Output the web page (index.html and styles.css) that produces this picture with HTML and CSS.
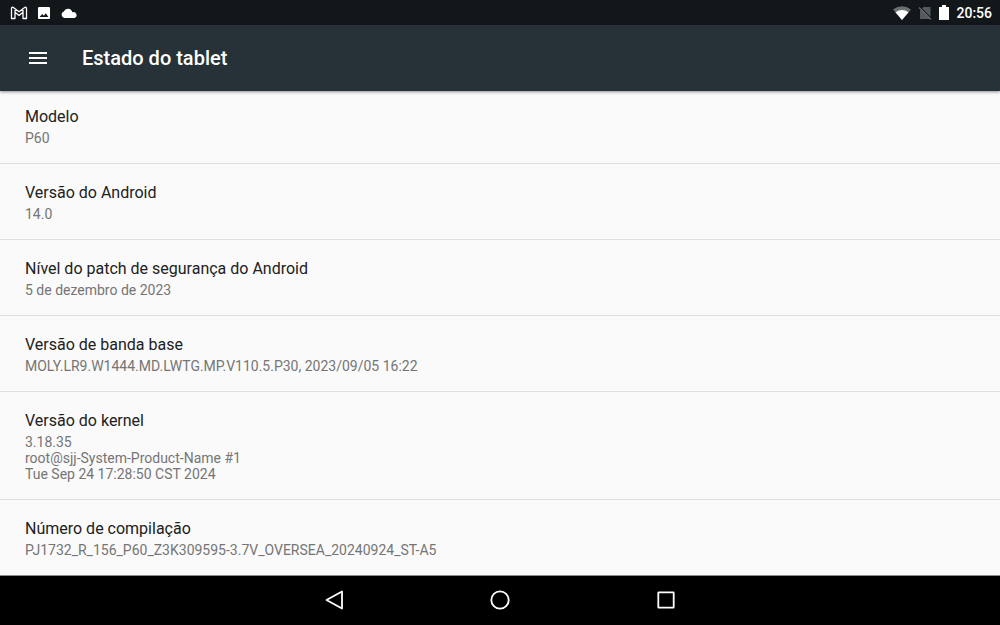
FILE: index.html
```html
<!DOCTYPE html>
<html lang="pt">
<head>
	<meta charset="utf-8">
	<meta name="viewport" content="width=device-width, initial-scale=1">
	<title>Estado do tablet</title>
	<link rel="stylesheet" href="styles.css">
</head>
<body>
	<div class="status">
		<div class="notifications">
			<svg width="18" height="14" viewBox="0 0 18 14"><path d="M1.500 12.500V2.600Q1.500 1 3 1.300L9 5.800 15 1.300Q16.500 1 16.500 2.600V12.500H13V6.300L9 9.500 5 6.300V12.500ZM5 2.800V6.300M13 2.800V6.300" fill="none" stroke="#fff" stroke-width="1.300" stroke-linejoin="round"/></svg>
			<svg width="14" height="14" viewBox="0 0 14 14"><path fill="#fff" fill-rule="evenodd" d="M2 1H12Q13 1 13 2V12Q13 13 12 13H2Q1 13 1 12V2Q1 1 2 1ZM2.600 11H11.400L8.800 7.200 6.800 9.700 5.200 8Z"/></svg>
			<svg width="18" height="14" viewBox="0 0 18 14"><path fill="#fff" d="M4.500 12A3.300 3.300 0 0 1 3.800 5.600A4.500 4.500 0 0 1 12.300 6.200A3 3 0 0 1 14.500 12Z"/></svg>
		</div>
		<div class="system">
			<svg width="18" height="14" viewBox="0 0 18 14"><path fill="#69706f" d="M0 3.500Q9-3 18 3.500L9 14Z"/><path fill="#fff" d="M2.500 6.200Q9 1.800 15.500 6.200L9 14Z"/></svg>
			<svg width="14" height="14" viewBox="0 0 14 14"><path fill="#555b5d" d="M5.500 1H12.500V13H2V4.500Z"/><path d="M1.700 .8L13.700 12.800" stroke="#12171a" stroke-width="1.200"/><path d="M1 1.500L13 13.500" stroke="#666c6e" stroke-width="1.200"/></svg>
			<svg width="10" height="16" viewBox="0 0 10 16"><path fill="#fff" d="M3 0H7V2H10V15H0V2H3Z"/></svg>
			<span class="clock">20:56</span>
		</div>
	</div>
	<header class="toolbar">
		<button class="menu" type="button" aria-label="Menu">
			<svg width="18" height="14" viewBox="0 0 18 14"><path fill="#fff" d="M0 1H18V3H0ZM0 6H18V8H0ZM0 11H18V13H0Z"/></svg>
		</button>
		<h1 class="title">Estado do tablet</h1>
	</header>
	<main class="content">
		<dl class="list">
			<div class="item">
				<dt>Modelo</dt>
				<dd>P60</dd>
			</div>
			<div class="item">
				<dt>Versão do Android</dt>
				<dd>14.0</dd>
			</div>
			<div class="item">
				<dt>Nível do patch de segurança do Android</dt>
				<dd>5 de dezembro de 2023</dd>
			</div>
			<div class="item">
				<dt>Versão de banda base</dt>
				<dd>MOLY.LR9.W1444.MD.LWTG.MP.V110.5.P30, 2023/09/05 16:22</dd>
			</div>
			<div class="item">
				<dt>Versão do kernel</dt>
				<dd>3.18.35<br>root@sjj-System-Product-Name #1<br>Tue Sep 24 17:28:50 CST 2024</dd>
			</div>
			<div class="item">
				<dt>Número de compilação</dt>
				<dd>PJ1732_R_156_P60_Z3K309595-3.7V_OVERSEA_20240924_ST-A5</dd>
			</div>
		</dl>
	</main>
	<nav class="navbar">
		<button type="button" aria-label="Voltar">
			<svg width="20" height="20" viewBox="0 0 20 20"><path d="M18 1.500V18.500L2.500 10Z" fill="none" stroke="#fff" stroke-width="1.800" stroke-linejoin="round"/></svg>
		</button>
		<button type="button" aria-label="Início">
			<svg width="20" height="20" viewBox="0 0 20 20"><circle cx="10" cy="10" r="8.700" fill="none" stroke="#fff" stroke-width="1.800"/></svg>
		</button>
		<button type="button" aria-label="Recentes">
			<svg width="20" height="20" viewBox="0 0 20 20"><rect x="2.300" y="2.300" width="15.400" height="15.400" rx="0.500" fill="none" stroke="#fff" stroke-width="1.800"/></svg>
		</button>
	</nav>
</body>
</html>
```
FILE: styles.css
```css
*{
	margin: 0;
	padding: 0;
	box-sizing: border-box;
}
body{
	display: flex;
	flex-direction: column;
	height: 100vh;
	background: #fafafa;
	font-family: Roboto, "Liberation Sans", sans-serif;
	color: #212121;
}
svg{
	display: block;
}
button{
	display: flex;
	align-items: center;
	justify-content: center;
	border: none;
	background: none;
	cursor: pointer;
}
.status{
	display: flex;
	flex: none;
	justify-content: space-between;
	align-items: center;
	height: 25px;
	padding: 0 8px 0 10px;
	background: #12171a;
}
.notifications{
	display: flex;
	align-items: center;
	gap: 9px;
}
.system{
	display: flex;
	align-items: center;
	gap: 7px;
}
.clock{
	font-size: 14px;
	font-weight: 500;
	line-height: 24px;
	color: #fff;
}
.toolbar{
	display: flex;
	flex: none;
	align-items: center;
	gap: 24px;
	height: 66px;
	padding: 0 18px;
	background: #273238;
	box-shadow: 0 1px 3px rgba(40, 30, 60, 0.5);
	z-index: 1;
}
.menu{
	width: 40px;
	height: 40px;
}
.title{
	font-size: 20px;
	font-weight: 500;
	line-height: 24px;
	color: #fff;
}
.content{
	flex: 1;
	min-height: 0;
	overflow: hidden;
}
.item{
	padding: 19px 25px 17px;
	border-bottom: 1px solid #dfdfdf;
}
.item:first-child{
	padding-top: 16px;
}
.item dt{
	font-size: 16px;
	line-height: 20px;
	margin-bottom: 3px;
}
.item dd{
	font-size: 14px;
	line-height: 16px;
	color: #757575;
}
.navbar{
	display: flex;
	flex: none;
	justify-content: center;
	gap: 126px;
	height: 50px;
	padding-bottom: 1px;
	border-top: 1px solid #8a8f8e;
	background: #000;
}
.navbar button{
	width: 40px;
}
```
